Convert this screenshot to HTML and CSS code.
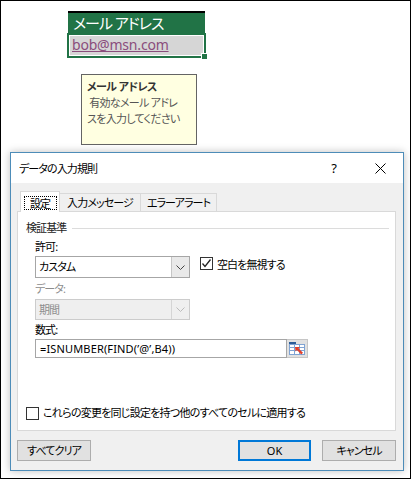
FILE: index.html
```html
<!DOCTYPE html>
<html lang="ja">
<head>
	<meta charset="UTF-8">
	<title>データの入力規則</title>
	<link rel="stylesheet" href="styles.css">
</head>
<body>
	<div class="screen">
		<div class="col-head">メール アドレス</div>
		<div class="cell">
			<span class="cell-text">bob@msn.com</span>
			<span class="handle"></span>
		</div>
		<div class="tip">
			<div class="tip-title">メール アドレス</div>
			<div class="tip-text">&nbsp;有効なメール アドレ<br>スを入力してください</div>
		</div>

		<div class="dialog">
			<div class="dialog-title">
				<span class="title-text">データの入力規則</span>
				<span class="title-help">?</span>
				<svg class="title-close" width="11" height="11" viewBox="0 0 11 11">
					<path d="M0.5 0.5 L10.5 10.5 M10.5 0.5 L0.5 10.5" stroke="#000" stroke-width="1" fill="none"/>
				</svg>
			</div>
			<div class="dialog-body">
				<div class="tabs">
					<div class="tab active"><span class="focus">設定</span></div>
					<div class="tab tab-msg">入力メッセージ</div>
					<div class="tab tab-err">エラーアラート</div>
				</div>
				<div class="panel">
					<div class="legend">
						<span>検証基準</span>
						<span class="legend-line"></span>
					</div>
					<div class="indent">
						<div class="label lbl-allow">許可:</div>
						<div class="allow-row">
							<div class="combo">
								<span class="combo-text">カスタム</span>
								<span class="combo-btn">
									<svg width="9" height="5" viewBox="0 0 9 5"><polyline points="0.5,0.5 4.5,4.5 8.5,0.5" stroke="#444" fill="none"/></svg>
								</span>
							</div>
							<span class="check checked">
								<svg width="11" height="11" viewBox="0 0 11 11"><polyline points="1.5,5.5 4,8.5 9.5,1.5" stroke="#222" stroke-width="1.3" fill="none"/></svg>
							</span>
							<span class="check-label">空白を無視する</span>
						</div>
						<div class="label disabled lbl-data">データ:</div>
						<div class="combo combo-off">
							<span class="combo-text">期間</span>
							<span class="combo-btn">
								<svg width="9" height="5" viewBox="0 0 9 5"><polyline points="0.5,0.5 4.5,4.5 8.5,0.5" stroke="#bbb" fill="none"/></svg>
							</span>
						</div>
						<div class="label lbl-formula">数式:</div>
						<div class="formula">
							<span class="formula-text">=ISNUMBER(FIND(’@’,B4))</span>
							<span class="ref-btn">
								<svg width="16" height="13" viewBox="0 0 16 13">
									<rect x="0.5" y="2.5" width="15" height="10" fill="#fff" stroke="#7fa3d3"/>
									<path d="M0.5 5.5 H15.5 M0.5 8.5 H15.5 M5.5 2.5 V12.5 M10.5 2.5 V12.5" stroke="#7fa3d3" fill="none"/>
									<rect x="0" y="0" width="7" height="2" fill="#2b5c97"/>
									<polygon points="6,5 11,5 9.6,6.4 14,10.8 12.3,12.5 7.9,8.1 6.5,9.5" fill="#e2402c"/>
								</svg>
							</span>
						</div>
					</div>
					<div class="apply-row">
						<span class="check"></span>
						<span class="check-label">これらの変更を同じ設定を持つ他のすべてのセルに適用する</span>
					</div>
				</div>
				<div class="buttons">
					<a href="javascript:;" class="btn btn-clear">すべてクリア</a>
					<a href="javascript:;" class="btn btn-ok">OK</a>
					<a href="javascript:;" class="btn btn-cancel">キャンセル</a>
				</div>
			</div>
		</div>
	</div>
</body>
</html>
```

FILE: styles.css
```css
html,body{
	margin:0;
	background: #fff;
}
body{
	font-family: "Noto Sans", "Noto Sans CJK JP", sans-serif;
	font-size: 11px;
	letter-spacing: -0.9px;
	font-feature-settings: "palt";
	color: #000;
}
.screen{
	width: 411px;
	height: 479px;
	border: 1px solid #000;
	box-sizing: border-box;
	overflow: hidden;
	display: flex;
	flex-direction: column;
	align-items: flex-start;
}

/* sheet */
.col-head{
	margin: 10px 0 0 67px;
	width: 137px;
	height: 22px;
	box-sizing: border-box;
	border-top: 2px solid #000;
	background: #217346;
	color: #fff;
	font-size: 15px;
	letter-spacing: -1px;
	line-height: 20px;
	padding-left: 5px;
}
.cell{
	position: relative;
	margin-left: 66px;
	width: 139px;
	height: 25px;
	box-sizing: border-box;
	border: 2px solid #217346;
	background: #d6d6d6;
	box-shadow: inset 0 0 0 1px #fff;
	padding-left: 3px;
	line-height: 20px;
}
.cell-text{
	font-size: 14px;
	color: #8a4d7c;
	text-decoration: underline;
	letter-spacing: -0.2px;
}
.handle{
	position: absolute;
	right: -4px;
	bottom: -4px;
	width: 5px;
	height: 5px;
	background: #217346;
	border: 1px solid #fff;
}
.tip{
	margin: 16px 0 0 80px;
	width: 116px;
	height: 71px;
	box-sizing: border-box;
	border: 1px solid #646464;
	background: #ffffe1;
	padding: 4px 5px;
	line-height: 16px;
}
.tip-title{
	font-weight: bold;
	color: #333;
	letter-spacing: -0.6px;
}
.tip-text{
	color: #555;
	letter-spacing: -0.7px;
}

/* dialog */
.dialog{
	margin: 7px 0 0 9px;
	width: 394px;
	height: 319px;
	box-sizing: border-box;
	border: 1px solid #4d8cb8;
	background: #f0f0f0;
	box-shadow: 0 0 8px rgba(0,0,0,0.25);
}
.dialog-title{
	height: 30px;
	background: #fff;
	display: flex;
	align-items: center;
	padding-left: 8px;
}
.title-text{
	flex: 1;
}
.title-help{
	font-size: 13px;
	margin-right: 39px;
}
.title-close{
	margin-right: 17px;
}
.dialog-body{
	padding: 8px 7px 8px 6px;
}
.tabs{
	display: flex;
	height: 20px;
	padding-left: 3px;
	align-items: flex-end;
}
.tab{
	height: 18px;
	box-sizing: border-box;
	border: 1px solid #d9d9d9;
	border-bottom: none;
	line-height: 17px;
	text-align: center;
	background: #f0f0f0;
	margin-left: -1px;
}
.tab.active{
	width: 40px;
	height: 21px;
	margin-left: 0;
	margin-bottom: -1px;
	background: #fff;
	position: relative;
	z-index: 1;
	padding-top: 3px;
}
.focus{
	display: inline-block;
	width: 33px;
	height: 14px;
	line-height: 13px;
	box-sizing: border-box;
	border: 1px dotted #000;
}
.tab-msg{
	width: 82px;
}
.tab-err{
	width: 77px;
}
.panel{
	height: 220px;
	box-sizing: border-box;
	border: 1px solid #d9d9d9;
	background: #fff;
	padding-top: 8px;
}
.legend{
	display: flex;
	align-items: center;
	height: 16px;
	line-height: 16px;
	padding: 0 6px 0 8px;
	color: #222;
}
.legend-line{
	flex: 1;
	height: 1px;
	background: #dcdcdc;
	margin-left: 6px;
}
.indent{
	margin-left: 17px;
}
.label{
	height: 16px;
	line-height: 16px;
}
.label.disabled{
	color: #8d8d8d;
}
.lbl-allow{
	margin-top: 3px;
}
.lbl-data{
	margin-top: 3px;
}
.lbl-formula{
	margin-top: 2px;
}
.allow-row{
	display: flex;
	align-items: flex-start;
	margin-top: 1px;
}
.combo{
	width: 155px;
	height: 22px;
	box-sizing: border-box;
	border: 1px solid #a6a6a6;
	background: #fff;
	display: flex;
}
.combo-text{
	flex: 1;
	padding-left: 3px;
	line-height: 20px;
}
.combo-btn{
	width: 17px;
	background: #e9e9e9;
	border-left: 1px solid #c6c6c6;
	display: flex;
	align-items: center;
	justify-content: center;
}
.combo-off{
	margin-top: 2px;
	height: 21px;
	background: #efefef;
	border-color: #cccccc;
	color: #8d8d8d;
}
.combo-off .combo-text{
	line-height: 19px;
}
.combo-off .combo-btn{
	background: #efefef;
	border-left-color: #d5d5d5;
}
.check{
	width: 13px;
	height: 13px;
	box-sizing: border-box;
	border: 1px solid #333;
	background: #fff;
	display: flex;
	align-items: center;
	justify-content: center;
}
.allow-row .check{
	margin: 1px 0 0 10px;
}
.check-label{
	margin-left: 4px;
	line-height: 16px;
}
.allow-row .check-label{
	margin-top: 1px;
}
.apply-row .check-label{
	letter-spacing: -0.75px;
}
.formula{
	margin-top: 1px;
	display: flex;
	height: 19px;
}
.formula-text{
	width: 252px;
	box-sizing: border-box;
	border: 1px solid #a6a6a6;
	background: #fff;
	line-height: 17px;
	padding-left: 4px;
	letter-spacing: 0.15px;
}
.ref-btn{
	width: 21px;
	background: #e1e1e1;
	border: 1px solid #c6c6c6;
	border-left: none;
	box-sizing: border-box;
	display: flex;
	align-items: center;
	justify-content: center;
}
.apply-row{
	display: flex;
	align-items: center;
	margin: 47px 0 0 8px;
	height: 16px;
}
.buttons{
	display: flex;
	margin-top: 9px;
}
.btn{
	display: block;
	width: 74px;
	height: 21px;
	box-sizing: border-box;
	border: 1px solid #adadad;
	background: #e1e1e1;
	color: #000;
	text-decoration: none;
	text-align: center;
	line-height: 19px;
}
.btn-clear{
	margin-left: 0;
}
.btn-ok{
	margin-left: auto;
	width: 73px;
	border: 2px solid #0078d7;
	line-height: 17px;
	letter-spacing: 0;
}
.btn-cancel{
	margin-left: 11px;
}
```
